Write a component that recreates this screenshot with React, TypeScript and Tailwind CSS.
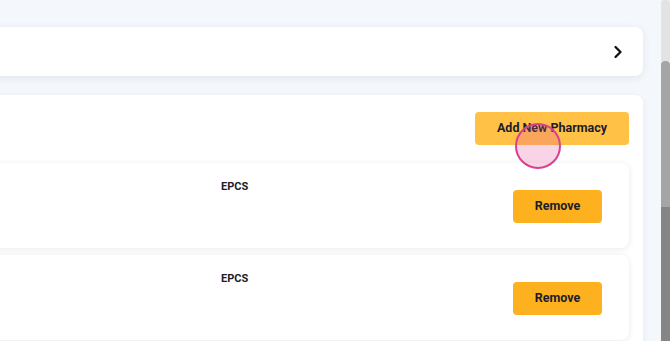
import { ChevronRight } from 'lucide-react';

type Pharmacy = {
    name: string;
    type: string;
};

const pharmacies: Pharmacy[] = [
    { name: '', type: 'EPCS' },
    { name: '', type: 'EPCS' },
];

function PharmacyRow({ pharmacy }: { pharmacy: Pharmacy }) {
    return (
        <div className="grid h-[85px] grid-cols-[231px_1fr_auto] rounded-lg bg-white pr-[27px] shadow-[0_1px_6px_rgba(0,0,0,0.09)]">
            <div className="truncate pt-[16px] text-[11px]">{pharmacy.name}</div>
            <div className="pt-[16px] text-[11px] font-bold leading-[16px] text-[#1c1d2b]">{pharmacy.type}</div>
            <div className="flex items-center pt-[1px]">
                <button className="h-[33px] w-[89px] rounded bg-[#fdb11e] text-[12.5px] font-bold text-[#1c1d2b]">
                    Remove
                </button>
            </div>
        </div>
    );
}

export default function App() {
    return (
        <div className="flex h-[341px] w-[670px] overflow-hidden bg-[#f4f7fc] font-['Roboto',sans-serif]">
            <main className="w-[661px] overflow-hidden pr-[18px]">
                <div className="-ml-[24px]">
                    <div className="mt-[27px] flex h-[49px] items-center justify-end rounded-lg bg-white pr-[15px] shadow-[0_2px_8px_rgba(0,0,0,0.08)]">
                        <ChevronRight size={20} strokeWidth={2.75} className="text-[#111]" />
                    </div>

                    <section className="mt-[19px] rounded-lg bg-white pl-[14px] pr-[14px] pt-[17px] pb-4 shadow-[0_2px_8px_rgba(0,0,0,0.06)]">
                        <div className="flex justify-end">
                            <div className="relative">
                                <button className="h-[33px] w-[154px] rounded bg-[#ffc247] text-[12.5px] font-bold text-[#1c1d2b]">
                                    Add New Pharmacy
                                </button>
                                <span className="pointer-events-none absolute left-[40px] top-[11px] h-[46px] w-[46px] rounded-full border-2 border-[#d9408f] bg-[#e8509a]/25"></span>
                            </div>
                        </div>

                        <div className="mt-[18px] flex flex-col gap-[7px]">
                            {pharmacies.map((p, i) => (
                                <PharmacyRow key={i} pharmacy={p} />
                            ))}
                        </div>
                    </section>
                </div>
            </main>

            <div className="flex w-[9px] flex-col bg-[#f1f1f1]">
                <div className="h-[61px] rounded-t-[4px] bg-[#e3e3e3]"></div>
                <div className="h-[146px] rounded-t-[4px] bg-[#a5a5a5]"></div>
                <div className="flex-1 bg-[#858585]"></div>
            </div>
        </div>
    );
}
